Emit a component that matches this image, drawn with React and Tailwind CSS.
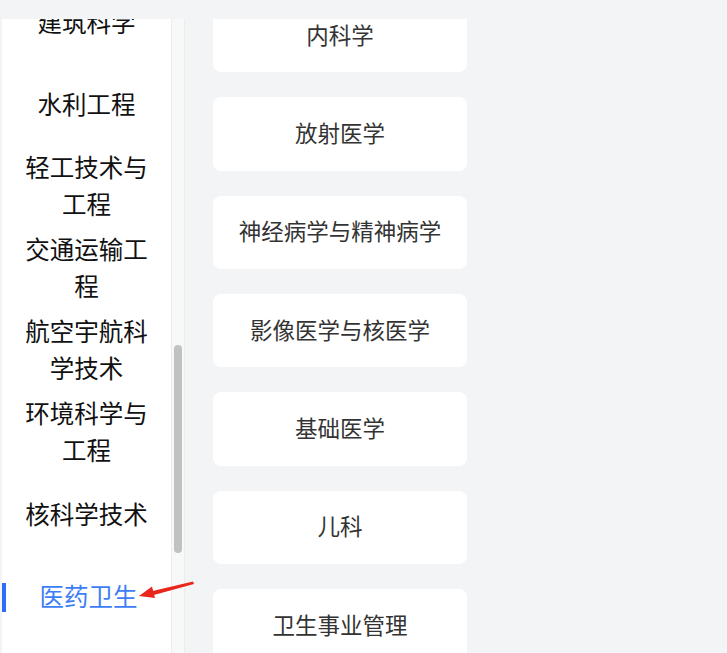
import React from "react";

const sideItems = [
  ["建筑科学"],
  ["水利工程"],
  ["轻工技术与", "工程"],
  ["交通运输工", "程"],
  ["航空宇航科", "学技术"],
  ["环境科学与", "工程"],
  ["核科学技术"],
];

const cards = [
  "内科学",
  "放射医学",
  "神经病学与精神病学",
  "影像医学与核医学",
  "基础医学",
  "儿科",
  "卫生事业管理",
];

export default function App() {
  return (
    <div
      className="relative w-[727px] h-[653px] bg-[#f3f4f6] flex flex-col overflow-hidden"
      style={{ fontFamily: '"Noto Sans CJK SC", "Noto Sans", sans-serif' }}
    >
      <div className="h-[19px] shrink-0" />
      <div className="flex flex-1 min-h-0">
        <div className="w-[2px] shrink-0" />
        {/* sidebar */}
        <div className="w-[169px] shrink-0 bg-white overflow-hidden">
          <div className="mt-[-39px] flex flex-col">
            {sideItems.map((lines, i) => (
              <div
                key={i}
                className="h-[82px] flex flex-col items-center justify-center text-[24.5px] leading-[37px] text-[#111] px-[12px] text-center"
              >
                {lines.map((l, j) => (
                  <span key={j}>{l}</span>
                ))}
              </div>
            ))}
            <div className="relative h-[82px] flex items-center justify-center pl-[4px] text-[24.5px] leading-[37px] text-[#3d7ef5]">
              <div className="absolute left-0 top-[29px] w-[4px] h-[29px] bg-[#2f6bff]" />
              <span>医药卫生</span>
            </div>
          </div>
        </div>
        {/* scrollbar track */}
        <div className="w-[14px] shrink-0 bg-[#f8f8f8] border-l border-r border-[#ececec] flex flex-col">
          <div className="h-[326px]" />
          <div className="mx-auto w-[8px] h-[208px] rounded-full bg-[#c1c1c1]" />
        </div>
        {/* main */}
        <div className="flex-1 overflow-hidden pl-[28px]">
          <div className="mt-[-20px] flex flex-col gap-[25px] w-[254px]">
            {cards.map((c, i) => (
              <div
                key={i}
                className="h-[73.33px] rounded-[8px] bg-white flex items-center justify-center pb-[2px] text-[22.5px] text-[#333]"
              >
                {c}
              </div>
            ))}
          </div>
        </div>
      </div>
      {/* red annotation arrow */}
      <svg
        className="absolute left-0 top-0 pointer-events-none"
        width="727"
        height="653"
        viewBox="0 0 727 653"
      >
        <polygon points="193,581.5 194,584 152,595.5 150.5,591.5" fill="#e8261c" />
        <polygon points="139,596 152,586.5 155,598" fill="#e8261c" />
      </svg>
    </div>
  );
}
